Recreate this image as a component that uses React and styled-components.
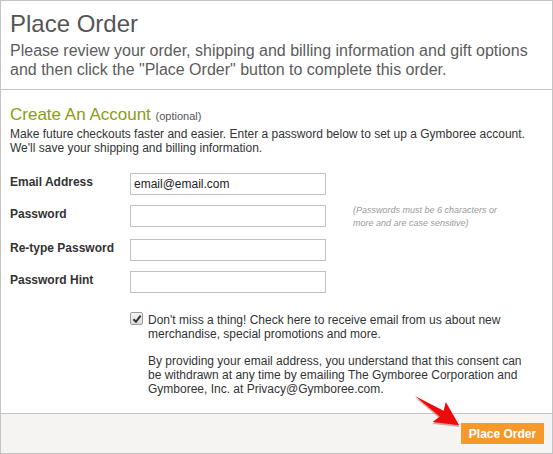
import React from 'react'
import styled, { createGlobalStyle } from 'styled-components'

const GlobalStyle = createGlobalStyle`
    html, body {
        margin: 0;
        padding: 0;
        background: #ffffff;
    }
    body {
        font-family: "Liberation Sans", Arial, sans-serif;
        color: #333333;
    }
`

const Panel = styled.div`
    position: relative;
    box-sizing: border-box;
    width: 553px;
    height: 454px;
    border: 1px solid #c4c4c4;
    display: flex;
    flex-direction: column;
`

const Header = styled.div`
    padding: 8px 9px 10px 9px;
    border-bottom: 1px solid #c4c4c4;
`

const Title = styled.h1`
    margin: 0;
    font-size: 24px;
    line-height: 30px;
    font-weight: normal;
    color: #555555;
`

const Intro = styled.p`
    margin: 2px 0 0 0;
    font-size: 16px;
    line-height: 19px;
    color: #5c5c5c;
`

const Account = styled.div`
    flex: 1;
    padding: 14px 9px 0 9px;
`

const SectionTitle = styled.h2`
    margin: 0;
    font-size: 17px;
    line-height: 22px;
    font-weight: normal;
    color: #8c9b14;
`

const Optional = styled.span`
    font-size: 11px;
    color: #555555;
`

const Text = styled.p`
    margin: ${p => p.$top || 0}px 0 0 0;
    font-size: 12px;
    line-height: 14px;
    color: #333333;
`

const Form = styled.div`
    margin-top: 18px;
    display: flex;
    flex-direction: column;
`

const Row = styled.div`
    display: flex;
    align-items: flex-start;
    height: 22px;
    margin-bottom: ${p => p.$space || 0}px;
`

const Label = styled.label`
    width: 120px;
    padding-top: 2px;
    font-size: 12px;
    line-height: 14px;
    font-weight: bold;
    color: #333333;
`

const Input = styled.input`
    box-sizing: border-box;
    width: 196px;
    height: 22px;
    margin: 0;
    padding: 0 3px;
    border: 1px solid #c2c2c2;
    font-family: "Liberation Sans", Arial, sans-serif;
    font-size: 12px;
    color: #222222;
    outline: none;
`

const Hint = styled.div`
    margin: -1px 0 0 27px;
    width: 160px;
    font-size: 9px;
    line-height: 13px;
    font-style: italic;
    color: #9a9a9a;
`

const Consent = styled.div`
    margin: 20px 0 0 120px;
    display: flex;
    align-items: flex-start;
`

const CheckBox = styled.span`
    box-sizing: border-box;
    flex: none;
    width: 13px;
    height: 13px;
    margin-top: -1px;
    border: 1px solid #9c9c9c;
    border-radius: 2px;
    background: linear-gradient(#f4f4f4, #dcdcdc);
    display: flex;
    align-items: center;
    justify-content: center;
`

const ConsentText = styled.div`
    margin-left: 5px;
    width: 382px;
`

const Footer = styled.div`
    height: 39px;
    border-top: 1px solid #c4c4c4;
    background: #f5f4f2;
    display: flex;
    align-items: flex-start;
    justify-content: flex-end;
    padding-right: 8px;
`

const OrderButton = styled.button`
    margin-top: 9px;
    width: 83px;
    height: 21px;
    border: none;
    padding: 0;
    background: #f7982b;
    color: #ffffff;
    font-family: "Liberation Sans", Arial, sans-serif;
    font-size: 12px;
    font-weight: bold;
    cursor: pointer;
`

const Arrow = styled.svg`
    position: absolute;
    left: 403px;
    top: 383px;
    pointer-events: none;
`

export default function App() {
    return (
        <>
            <GlobalStyle />
            <Panel>
                <Header>
                    <Title>Place Order</Title>
                    <Intro>
                        Please review your order, shipping and billing information and gift options
                        and then click the "Place Order" button to complete this order.
                    </Intro>
                </Header>
                <Account>
                    <SectionTitle>
                        Create An Account <Optional>(optional)</Optional>
                    </SectionTitle>
                    <Text>
                        Make future checkouts faster and easier. Enter a password below to set up a Gymboree account.
                        <br />
                        We'll save your shipping and billing information.
                    </Text>
                    <Form>
                        <Row $space={10}>
                            <Label>Email Address</Label>
                            <Input defaultValue="email@email.com" />
                        </Row>
                        <Row $space={12}>
                            <Label>Password</Label>
                            <Input type="password" />
                            <Hint>(Passwords must be 6 characters or more and are case sensitive)</Hint>
                        </Row>
                        <Row $space={10}>
                            <Label>Re-type Password</Label>
                            <Input type="password" />
                        </Row>
                        <Row>
                            <Label>Password Hint</Label>
                            <Input />
                        </Row>
                    </Form>
                    <Consent>
                        <CheckBox>
                            <svg width="10" height="10" viewBox="0 0 10 10">
                                <path d="M1.5 5.2 L4 7.8 L8.6 1.6" fill="none" stroke="#333" strokeWidth="2" />
                            </svg>
                        </CheckBox>
                        <ConsentText>
                            <Text>
                                Don't miss a thing! Check here to receive email from us about new
                                merchandise, special promotions and more.
                            </Text>
                            <Text $top={13}>
                                By providing your email address, you understand that this consent can
                                be withdrawn at any time by emailing The Gymboree Corporation and
                                Gymboree, Inc. at Privacy@Gymboree.com.
                            </Text>
                        </ConsentText>
                    </Consent>
                </Account>
                <Footer>
                    <OrderButton>Place Order</OrderButton>
                </Footer>
                <Arrow width="62" height="47" viewBox="0 0 62 47">
                    <g transform="translate(11 12) rotate(33.5)">
                        <polygon points="0,0 32,-3.5 29,-12 53,0 29,12 32,3.5" fill="#9b0000" opacity="0.35" transform="translate(1 1.5)" />
                        <polygon points="0,0 32,-3.5 29,-12 53,0 29,12 32,3.5" fill="#ee0a0a" />
                    </g>
                </Arrow>
            </Panel>
        </>
    )
}
